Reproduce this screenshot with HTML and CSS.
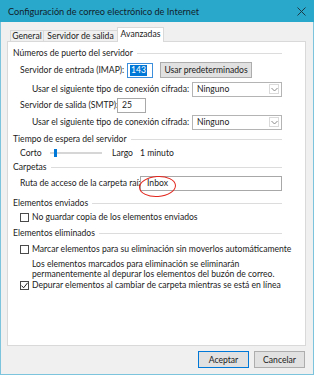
FILE: index.html
```html
<!DOCTYPE html>
<html lang="es">
<head>
<meta charset="utf-8">
<title>Configuración de correo electrónico de Internet</title>
<link rel="stylesheet" href="styles.css">
</head>
<body>
<div class="window">
  <div class="titlebar">
    <span class="title">Configuración de correo electrónico de Internet</span>
    <svg class="close" width="9" height="9" viewBox="0 0 9 9"><path d="M0.5 0.5L8.5 8.5M8.5 0.5L0.5 8.5" stroke="#1c3a46" stroke-width="1" fill="none"/></svg>
  </div>
  <div class="frame">
    <div class="tabs">
      <div class="tab t-general">General</div>
      <div class="tab t-salida">Servidor de salida</div>
      <div class="tab t-adv active">Avanzadas</div>
    </div>
    <div class="panel">
      <div class="section-head">Números de puerto del servidor</div>
      <div class="row r-imap">
        <span class="lbl w-imap">Servidor de entrada (IMAP):</span>
        <span class="input in-imap"><span class="sel">143</span></span>
        <span class="btn btn-def">Usar predeterminados</span>
      </div>
      <div class="row sub r-conn1">
        <span class="lbl w-conn">Usar el siguiente tipo de conexión cifrada:</span>
        <span class="combo">Ninguno<span class="arrow"><svg width="7" height="5" viewBox="0 0 7 5"><path d="M0.5 1L3.5 4L6.5 1" stroke="#8a8a8a" fill="none"/></svg></span></span>
      </div>
      <div class="row r-smtp">
        <span class="lbl w-smtp">Servidor de salida (SMTP):</span>
        <span class="input in-smtp">25</span>
      </div>
      <div class="row sub r-conn2">
        <span class="lbl w-conn">Usar el siguiente tipo de conexión cifrada:</span>
        <span class="combo">Ninguno<span class="arrow"><svg width="7" height="5" viewBox="0 0 7 5"><path d="M0.5 1L3.5 4L6.5 1" stroke="#8a8a8a" fill="none"/></svg></span></span>
      </div>
      <div class="section-head r-time">Tiempo de espera del servidor</div>
      <div class="row r-slider">
        <span class="lbl w-corto">Corto</span>
        <span class="track"><span class="thumb"></span></span>
        <span class="largo">Largo</span>
        <span class="minuto">1 minuto</span>
      </div>
      <div class="section-head r-carp">Carpetas</div>
      <div class="row r-ruta">
        <span class="lbl w-ruta">Ruta de acceso de la carpeta raíz:</span>
        <span class="input in-ruta">Inbox</span>
      </div>
      <div class="section-head r-env">Elementos enviados</div>
      <div class="row r-nog">
        <span class="check"></span>
        <span class="ctext">No guardar copia de los elementos enviados</span>
      </div>
      <div class="section-head r-elim">Elementos eliminados</div>
      <div class="row r-marcar">
        <span class="check"></span>
        <span class="ctext">Marcar elementos para su eliminación sin moverlos automáticamente</span>
      </div>
      <p class="note">Los elementos marcados para eliminación se eliminarán<br>permanentemente al depurar los elementos del buzón de correo.</p>
      <div class="row r-depurar">
        <span class="check checked"><svg width="9" height="9" viewBox="0 0 9 9"><path d="M1.5 4.6L3.6 6.8L7.6 1.8" stroke="#222" stroke-width="1" fill="none"/></svg></span>
        <span class="ctext">Depurar elementos al cambiar de carpeta mientras se está en línea</span>
      </div>
      <span class="annot"></span>
    </div>
    <div class="footer">
      <span class="btn btn-ok">Aceptar</span>
      <span class="btn btn-cancel">Cancelar</span>
    </div>
  </div>
</div>
</body>
</html>
```

FILE: styles.css
```css
* { box-sizing: border-box; }
html, body { margin: 0; padding: 0; }
body {
  width: 314px;
  height: 375px;
  overflow: hidden;
  background: #f0f0f0;
  font-family: Lato, "Noto Sans", sans-serif;
  font-size: 8.6px;
  color: #1b1b1b;
}
.window {
  width: 314px;
  height: 375px;
  display: flex;
  flex-direction: column;
}
.titlebar {
  height: 22px;
  flex: none;
  background: #2aa8cc;
  display: flex;
  align-items: center;
  justify-content: space-between;
  padding: 0 8px 0 8px;
  font-size: 9.2px;
  color: #10222a;
}
.frame {
  flex: 1;
  display: flex;
  flex-direction: column;
  background: #f0f0f0;
  border: 1px solid #7cc3dd;
  border-top: 0;
  padding: 0 7px 0 6px;
}
.tabs {
  height: 19px;
  flex: none;
  display: flex;
  align-items: flex-end;
  padding-left: 3px;
  position: relative;
  z-index: 1;
}
.tab {
  height: 11px;
  line-height: 10px;
  border: 1px solid #d9d9d9;
  border-bottom: 0;
  background: #f0f0f0;
  text-align: center;
  margin-right: -1px;
}
.t-general { width: 34px; }
.t-salida { width: 75px; }
.t-adv { width: 47px; }
.tab.active {
  height: 15px;
  line-height: 13px;
  background: #fff;
  margin-bottom: -1px;
}
.panel {
  height: 305px;
  flex: none;
  background: #fff;
  border: 1px solid #d9d9d9;
  padding: 5px 23px 0 5px;
  position: relative;
}
.section-head {
  display: flex;
  align-items: center;
  height: 12px;
  white-space: nowrap;
}
.section-head::after {
  content: "";
  flex: 1;
  height: 1px;
  background: #dcdcdc;
  margin-left: 4px;
}
.row {
  display: flex;
  align-items: center;
  height: 12px;
  padding-left: 7px;
  white-space: nowrap;
}
.row.sub { padding-left: 19px; }
.lbl { flex: none; }
.w-imap { width: 107px; }
.w-conn { width: 160px; }
.w-smtp { width: 97px; }
.w-ruta { width: 120px; }
.w-corto { width: 30px; }

.r-imap { margin-top: 5px; }
.r-conn1 { margin-top: 7px; }
.r-smtp { margin-top: 4px; }
.r-conn2 { margin-top: 5px; }
.r-time { margin-top: 5px; }
.r-slider { margin-top: 2px; }
.r-carp { margin-top: 2px; }
.r-ruta { margin-top: 4px; }
.r-env { margin-top: 8px; }
.r-nog { margin-top: 2px; }
.r-elim { margin-top: 4px; }
.r-marcar { margin-top: 4px; }
.r-depurar { margin-top: 0; }

.input {
  flex: none;
  height: 15px;
  border: 1px solid #a8a8a8;
  background: #fff;
  display: flex;
  align-items: center;
  padding-left: 3px;
}
.in-imap { width: 26px; border-color: #3d8fdc; padding-left: 2px; }
.in-imap .sel { background: #0078d7; color: #fff; padding: 0 1px; line-height: 11px; }
.in-smtp { width: 29px; padding-left: 4px; }
.in-ruta { flex: 1; padding-left: 6px; }

.btn {
  flex: none;
  height: 16px;
  background: #e1e1e1;
  border: 1px solid #adadad;
  display: flex;
  align-items: center;
  justify-content: center;
}
.btn-def { width: 92px; margin-left: 7px; }

.combo {
  flex: none;
  width: 90px;
  height: 15px;
  border: 1px solid #b4b4b4;
  background: #fff;
  display: flex;
  align-items: center;
  padding-left: 4px;
  position: relative;
}
.arrow {
  margin-left: auto;
  margin-right: 2px;
  width: 10px;
  height: 10px;
  border: 1px solid #dadada;
  display: flex;
  align-items: center;
  justify-content: center;
}

.track {
  flex: none;
  width: 52px;
  height: 2px;
  background: #d6d6d6;
  position: relative;
}
.thumb {
  position: absolute;
  left: 4px;
  top: -3px;
  width: 3px;
  height: 8px;
  background: #0078d7;
}
.largo { margin-left: 10px; }
.minuto { margin-left: 7px; }

.check {
  flex: none;
  width: 9px;
  height: 9px;
  border: 1px solid #4a4a4a;
  background: #fff;
  display: flex;
}
.check.checked svg { margin: -1px; }
.ctext { margin-left: 3px; }

.note {
  margin: 4px 0 0 0;
  padding-left: 19px;
  line-height: 10px;
  white-space: nowrap;
}

.annot {
  position: absolute;
  left: 131px;
  top: 134px;
  width: 37px;
  height: 21px;
  border: 1.5px solid #e2261d;
  border-radius: 50%;
  transform: rotate(-4deg);
}

.footer {
  flex: 1;
  display: flex;
  justify-content: flex-end;
  align-items: flex-start;
  padding-top: 5px;
  padding-right: 1px;
  gap: 5px;
}
.btn-ok, .btn-cancel { width: 51px; height: 17px; }
.btn-ok { border-color: #0078d7; }
```
